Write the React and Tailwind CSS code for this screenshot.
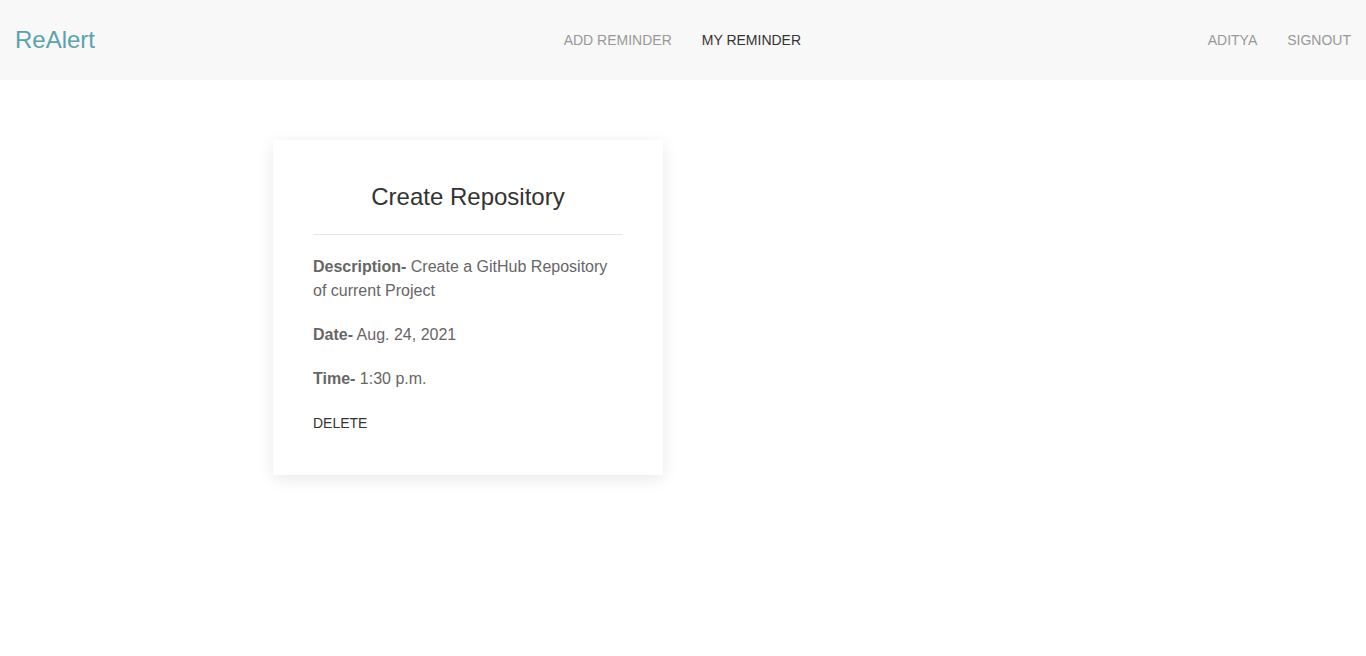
import React from 'react'

function Navbar() {
  return (
    <nav className="flex items-center justify-between h-20 bg-[#f8f8f8] px-[15px]">
      <a className="text-[24px] text-[#5ba3ab] leading-none">ReAlert</a>
      <ul className="flex items-center text-[14px] uppercase ml-[77px]">
        <li className="px-[15px] text-[#999]">Add Reminder</li>
        <li className="px-[15px] text-[#333]">My Reminder</li>
      </ul>
      <ul className="flex items-center text-[14px] uppercase -mr-[15px]">
        <li className="px-[15px] text-[#999]">Aditya</li>
        <li className="px-[15px] text-[#999]">Signout</li>
      </ul>
    </nav>
  )
}

function ReminderCard({ title, description, date, time }) {
  return (
    <div className="w-[390px] bg-white px-10 pt-[41px] pb-[42px] shadow-[0_4px_16px_rgba(0,0,0,0.09)]">
      <h2 className="text-[24px] leading-8 text-center text-[#333]">{title}</h2>
      <hr className="mt-[21px] border-t border-[#e5e5e5]" />
      <p className="mt-5 text-[16px] leading-6 text-[#666]">
        <b className="font-bold">Description-</b> {description}
      </p>
      <p className="mt-5 text-[16px] leading-6 text-[#666]">
        <b className="font-bold">Date-</b> {date}
      </p>
      <p className="mt-5 text-[16px] leading-6 text-[#666]">
        <b className="font-bold">Time-</b> {time}
      </p>
      <button className="mt-[22px] block text-[14px] leading-5 text-[#333] uppercase">Delete</button>
    </div>
  )
}

export default function App() {
  return (
    <div className="min-h-screen bg-white font-['Liberation_Sans',Arial,sans-serif]">
      <Navbar />
      <main className="pt-[60px] pl-[273px]">
        <ReminderCard
          title="Create Repository"
          description="Create a GitHub Repository of current Project"
          date="Aug. 24, 2021"
          time="1:30 p.m."
        />
      </main>
    </div>
  )
}
